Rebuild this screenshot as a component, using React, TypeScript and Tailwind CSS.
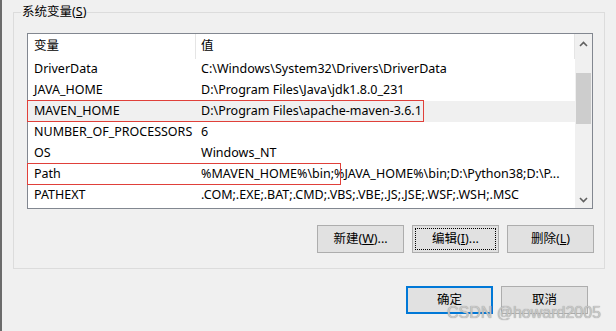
import React from 'react'

type Row = { name: string; value: string; selected?: boolean }

const ROWS: Row[] = [
  { name: 'DriverData', value: 'C:\\Windows\\System32\\Drivers\\DriverData' },
  { name: 'JAVA_HOME', value: 'D:\\Program Files\\Java\\jdk1.8.0_231' },
  { name: 'MAVEN_HOME', value: 'D:\\Program Files\\apache-maven-3.6.1', selected: true },
  { name: 'NUMBER_OF_PROCESSORS', value: '6' },
  { name: 'OS', value: 'Windows_NT' },
  { name: 'Path', value: '%MAVEN_HOME%\\bin;%JAVA_HOME%\\bin;D:\\Python38;D:\\P...' },
  { name: 'PATHEXT', value: '.COM;.EXE;.BAT;.CMD;.VBS;.VBE;.JS;.JSE;.WSF;.WSH;.MSC' },
]

function Chevron({ down }: { down?: boolean }) {
  return (
    <svg viewBox="0 0 9 6" className="h-[6px] w-[9px]" aria-hidden="true">
      <path
        d={down ? 'M1 1 L4.5 4.5 L8 1' : 'M1 5 L4.5 1.5 L8 5'}
        fill="none"
        stroke="#606060"
        strokeWidth="1.6"
      />
    </svg>
  )
}

function Btn({
  label,
  keyChar,
  tail = '',
  focused,
  primary,
}: {
  label: string
  keyChar?: string
  tail?: string
  focused?: boolean
  primary?: boolean
}) {
  return (
    <button
      className={`relative flex h-[28px] w-[87px] items-center justify-center bg-[#e1e1e1] text-[12.5px] text-black ${
        primary ? 'border-2 border-[#0078d7]' : 'border border-[#adadad]'
      }`}
    >
      {focused && <span className="absolute inset-[2px] border border-dotted border-black" />}
      <span>
        {label}
        {keyChar && (
          <>
            (<span className="underline">{keyChar}</span>)
          </>
        )}
        {tail}
      </span>
    </button>
  )
}

export default function App() {
  return (
    <div className="relative h-[331px] w-[616px] overflow-hidden border-l-2 border-[#6b6b6b] bg-[#f0f0f0] font-['Noto_Sans','Noto_Sans_CJK_SC',sans-serif] text-[12.5px] text-black">
      <fieldset className="ml-[11px] mt-[2px] h-[267px] w-[592px] border border-[#dcdcdc]">
        <legend className="ml-[7px] px-[1px] leading-[20px]">
          系统变量(<span className="underline">S</span>)
        </legend>

        <div className="pl-[13px] pr-[10px]">
          {/* list view */}
          <div className="relative mt-[11px] flex h-[176px] w-[566px] border border-[#828790] bg-white">
            <div className="flex-1">
              <div className="flex h-[25px] items-center">
                <div className="flex h-full w-[168px] items-center border-r border-[#e5e5e5] pl-[6px]">变量</div>
                <div className="flex h-full flex-1 items-center border-r border-[#e5e5e5] pl-[5px]">值</div>
              </div>
              {ROWS.map(r => (
                <div key={r.name} className={`flex h-[21px] items-center ${r.selected ? 'bg-[#f0f0f0]' : ''}`}>
                  <div className="w-[168px] whitespace-nowrap pl-[6px]">{r.name}</div>
                  <div className="flex-1 whitespace-nowrap pl-[5px]">{r.value}</div>
                </div>
              ))}
            </div>

            {/* scrollbar */}
            <div className="flex w-[17px] flex-col items-center bg-[#f0f0f0]">
              <div className="flex h-[17px] w-full items-center justify-center pt-[2px]">
                <Chevron />
              </div>
              <div className="mt-[22px] h-[51px] w-[15px] bg-[#cdcdcd]" />
              <div className="flex-1" />
              <div className="flex h-[17px] w-full items-center justify-center">
                <Chevron down />
              </div>
            </div>

            {/* red annotation boxes */}
            <div className="absolute left-[-1px] top-[66px] h-[22px] w-[397px] border border-[#e0403a]" />
            <div className="absolute left-[-1px] top-[129px] h-[22px] w-[314px] border border-[#e0403a]" />
          </div>

          <div className="mt-[16px] flex justify-end gap-[8px]">
            <Btn label="新建" keyChar="W" tail="..." />
            <Btn label="编辑" keyChar="I" tail="..." focused />
            <Btn label="删除" keyChar="L" />
          </div>
        </div>
      </fieldset>

      <div className="mt-[17px] flex justify-end gap-[8px] pr-[28px]">
        <Btn label="确定" primary />
        <Btn label="取消" />
      </div>

      <div className="pointer-events-none absolute bottom-[8px] right-[15px] font-['Liberation_Sans',sans-serif] text-[16px] leading-[20px] text-[#c8c8c8] [text-shadow:0_0_1px_#8a8a8a]">
        CSDN @howard2005
      </div>
    </div>
  )
}
